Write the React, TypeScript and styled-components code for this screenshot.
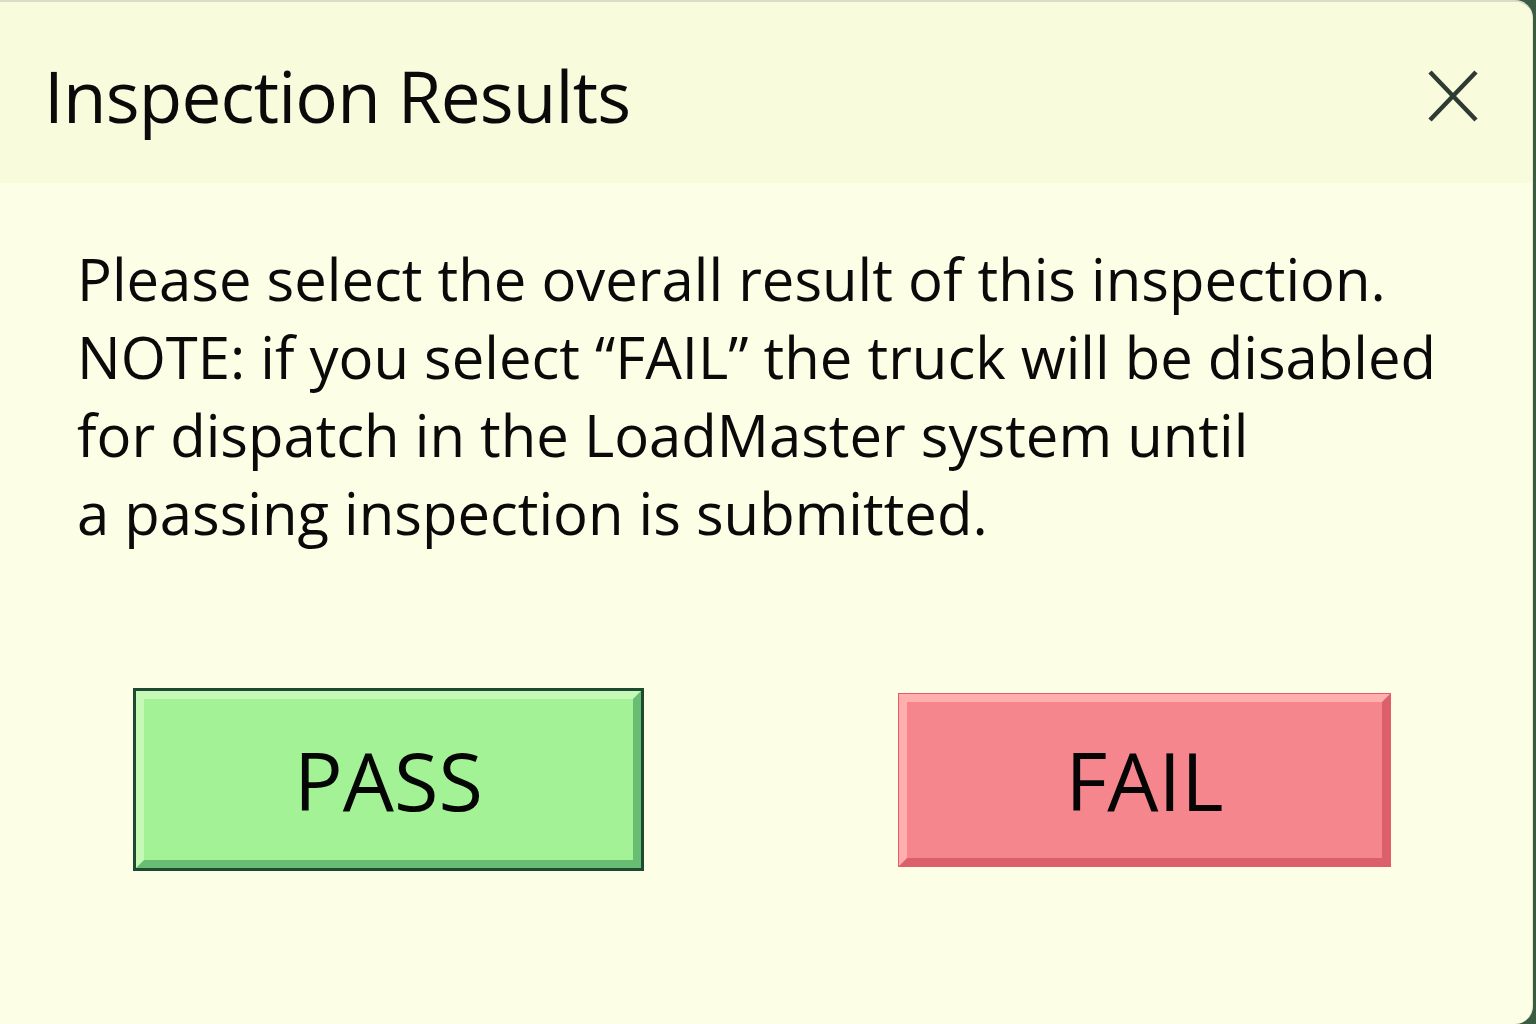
import React from 'react';
import styled, { createGlobalStyle } from 'styled-components';

const GlobalStyle = createGlobalStyle`
  html, body {
    margin: 0;
    padding: 0;
    background: #3b5b42;
  }
  body {
    font-family: "Open Sans", "Noto Sans", sans-serif;
  }
`;

const Dialog = styled.section`
  width: 1533px;
  height: 1024px;
  background: #fdfee6;
  border-radius: 0 18px 18px 0;
  border-top: 2px solid #d9dccb;
  border-right: 1px solid #e6e9cf;
  box-sizing: border-box;
  overflow: hidden;
  display: flex;
  flex-direction: column;
`;

const Header = styled.header`
  height: 181px;
  background: #f8fcdc;
  display: flex;
  align-items: center;
  justify-content: space-between;
  padding: 6px 54px 0 44px;
  box-sizing: border-box;
`;

const Title = styled.h1`
  margin: 0;
  font-size: 71px;
  font-weight: 400;
  color: #0a0a0a;
  letter-spacing: -0.8px;
`;

const CloseButton = styled.button`
  background: none;
  border: none;
  padding: 0;
  width: 50px;
  height: 52px;
  cursor: pointer;
  display: flex;
`;

const Message = styled.p`
  margin: 0;
  padding: 57px 0 0 77px;
  font-size: 58px;
  line-height: 78px;
  color: #0a0a0a;
`;

const Actions = styled.div`
  display: flex;
  align-items: center;
  gap: 258px;
  padding: 139px 0 0 136px;
`;

const ResultButton = styled.button<{ $face: string; $light: string; $dark: string; $edge: string; $w: number; $h: number; $edgeW: number }>`
  width: ${p => p.$w}px;
  height: ${p => p.$h}px;
  box-sizing: border-box;
  background: ${p => p.$face};
  border-style: solid;
  border-width: 8px;
  border-color: ${p => p.$light} ${p => p.$dark} ${p => p.$dark} ${p => p.$light};
  box-shadow: 0 0 0 ${p => p.$edgeW}px ${p => p.$edge};
  font-family: "Open Sans", "Noto Sans", sans-serif;
  font-size: 81px;
  font-weight: 400;
  color: #050505;
  padding: 0;
  cursor: pointer;
  display: flex;
  align-items: center;
  justify-content: center;
`;

export default function App() {
  return (
    <>
      <GlobalStyle />
      <Dialog>
        <Header>
          <Title>Inspection Results</Title>
          <CloseButton aria-label="Close">
            <svg width="50" height="52" viewBox="0 0 50 52">
              <path d="M2 2 L48 50 M48 2 L2 50" stroke="#2f3a33" strokeWidth="4.5" fill="none" />
            </svg>
          </CloseButton>
        </Header>
        <Message>
          Please select the overall result of this inspection.
          <br />
          NOTE: if you select “FAIL” the truck will be disabled
          <br />
          for dispatch in the LoadMaster system until
          <br />
          a passing inspection is submitted.
        </Message>
        <Actions>
          <ResultButton
            $face="#a4f296"
            $light="#c6f8b6"
            $dark="#69bd72"
            $edge="#1d4a33"
            $edgeW={3}
            $w={505}
            $h={177}
          >
            PASS
          </ResultButton>
          <ResultButton
            $face="#f6868e"
            $light="#ffb0ae"
            $dark="#dc606b"
            $edge="#e65a6a"
            $edgeW={1}
            $w={491}
            $h={172}
          >
            FAIL
          </ResultButton>
        </Actions>
      </Dialog>
    </>
  );
}
